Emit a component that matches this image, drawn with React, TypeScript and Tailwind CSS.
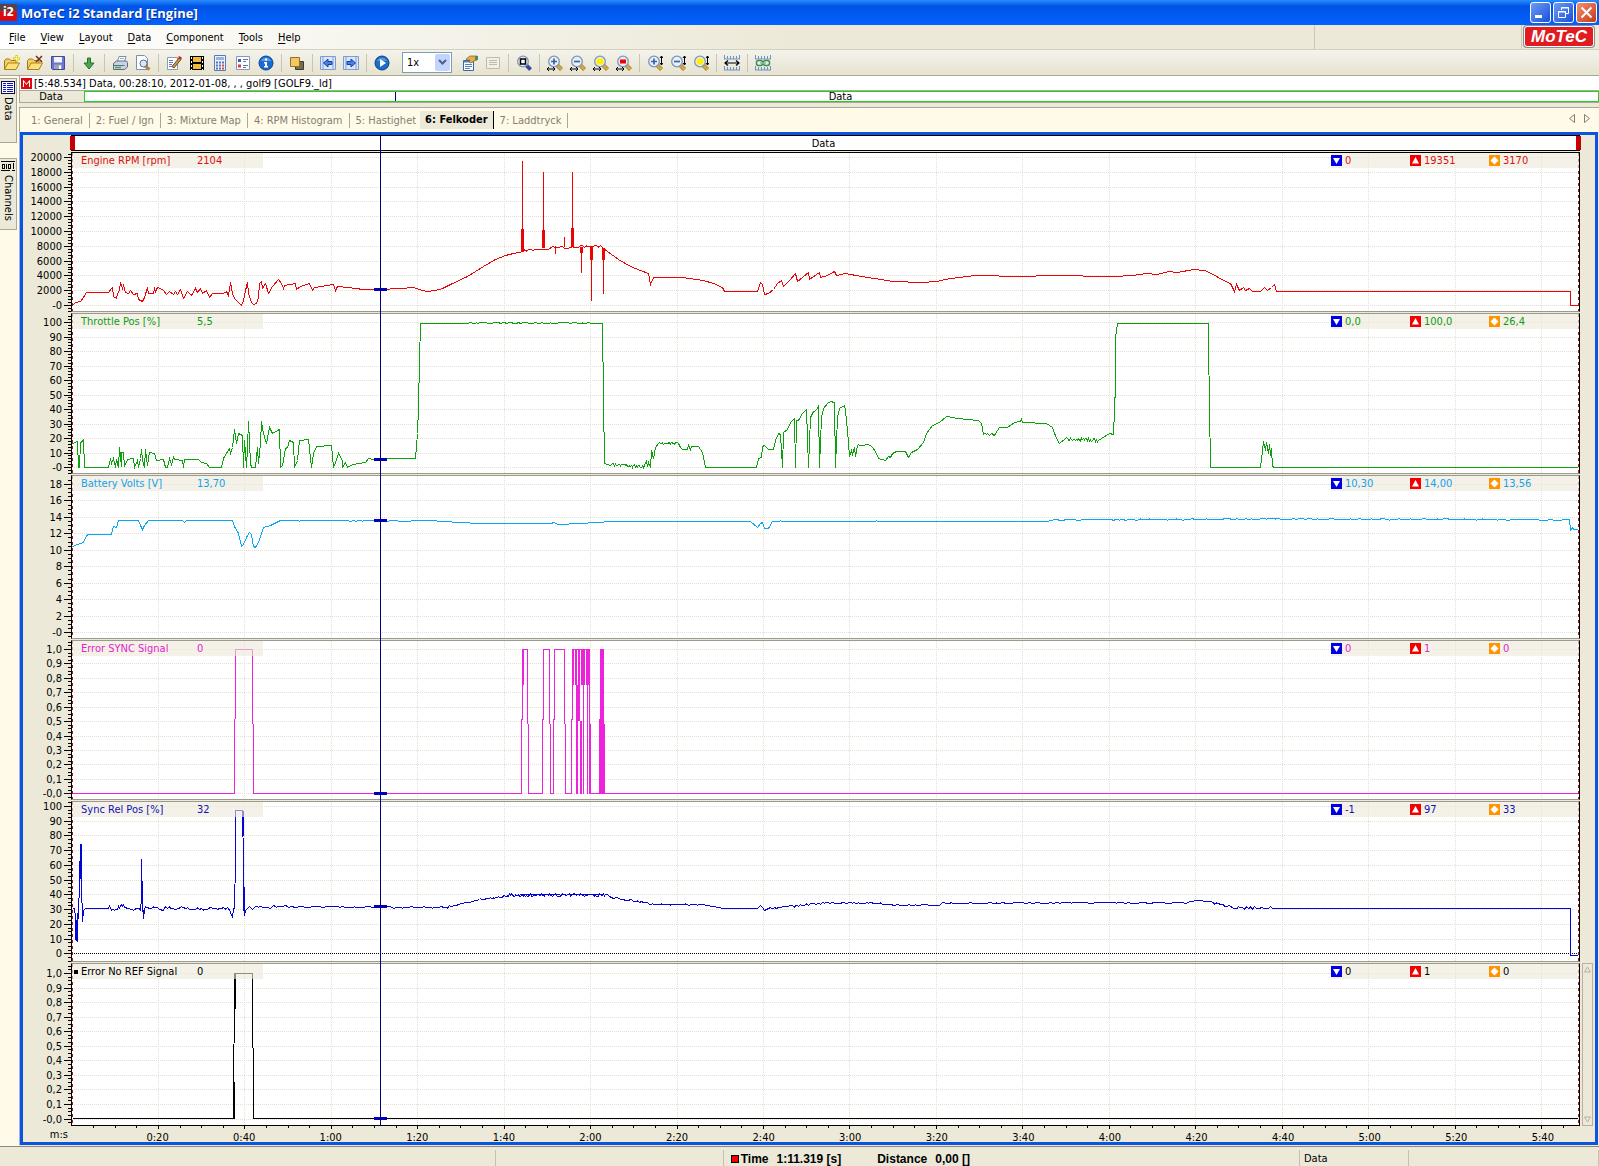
import React from "react";

/* ---------- Chart data, in chart pixels (x: 72 = 0 s, 4.322 px per second) ---------- */

const X0 = 72;
const PX_PER_S = 4.322;
const PLOT_W = 1507;
const DURATION = 348.534;
const CURSOR = 71.319;

function wobble(x0: number, x1: number, y0: number, y1: number, amp: number, step: number, seed: number) {
  const out: string[] = [];
  let s = seed;
  for (let x = x0; x <= x1; x += step) {
    s = (s * 16807) % 2147483647;
    const r = s / 2147483647 - 0.5;
    const y = y0 + ((y1 - y0) * (x - x0)) / (x1 - x0) + r * 2 * amp;
    out.push(`${x.toFixed(1)},${y.toFixed(1)}`);
  }
  return out.join(" ");
}

const rpm = [
  "72,305 75,302 80,301 83,297 86,292 108,292 111,288 112,287 113,296 116,298 117,293 119,290 120,282 122,288 123,285 125,292 128,293 130,290 133,294 137,293 138,299 142,301 144,297 147,287 148,293 153,293 154,288 155,291 157,287 160,288 163,290 166,294 169,291 173,294 175,291 177,294 180,289 183,298 187,291 191,295 195,288 197,292 200,288 202,293 206,290 209,297 212,293 223,293 226,291 228,295 230,282 232,293 234,298 237,301 241,305 243,300 245,290 247,282 248,293 251,302 253,304 256,303 258,297 259,283 261,281 262,288 265,283 268,293 272,286 278,279 281,283 283,288 284,285 290,284 295,283 296,289 300,286 309,283 312,290 314,287 333,284 335,290 337,286 347,287 363,289 380,289 400,288 413,287 419,289 426,291 435,290 442,288 450,284 467,276 483,266 495,259 505,255 513,253 523,251",
  wobble(524, 551, 250, 248, 0.9, 2, 7),
  wobble(552, 601, 247, 246, 1.2, 2, 19),
  "602,247 607,251 618,259 630,266 640,270 648,273 650,284 653,277 682,277 703,280 713,283 722,287 724,291 757,291 760,282 762,284 764,294 768,293 773,289 777,283 781,280 783,286 789,280 795,273 797,281 802,277 808,272 809,279 819,272 820,277 827,275 834,271 836,275 845,273 861,276 893,281 921,282 936,281 950,278 975,275 1021,276 1050,275 1114,276 1132,275 1146,273 1157,274 1168,271 1177,272 1193,269 1204,270 1211,273 1223,280 1230,283 1234,291 1236,284 1239,290 1243,287 1245,290 1249,288 1252,291 1260,291 1264,287 1267,290 1271,287 1274,284 1276,291 1570,291 1570,305 1577,305",
].join(" ");

const rpmBars: number[][] = [
  [522, 161, 1, 90], [521, 229, 3, 22], [543, 172, 1, 76], [542, 230, 3, 18], [572, 172, 1, 74], [571, 228, 3, 19],
  [564, 237, 1, 10], [555, 246, 1, 8], [581, 247, 1, 26], [580, 247, 3, 6], [591, 246, 1, 55], [590, 246, 3, 14],
  [603, 248, 1, 46], [602, 248, 3, 12],
];

const throttle = [
  "72,443 77,441 78,467 79,467 80,442 82,441 83,439 84,467 108,467 110,458 111,463 113,458 115,467 116,459 118,467 119,447 121,466 121,452 123,452 124,466 127,459 133,458 134,467 137,460 138,467 140,458 141,449 142,460 144,467 145,449 147,465 148,458 149,452 154,453 156,460 163,459 165,467 167,467 169,458 171,464 173,457 174,459 182,460 183,467 184,459 198,459 201,462 206,463 209,467 221,467 223,458 226,453 229,448 230,453 232,447 234,429 236,443 238,433 242,435 243,467 244,440 246,467 247,446 248,421 250,463 251,467 255,467 257,447 258,463 260,443 261,421 263,433 266,443 269,427 272,433 279,429 280,467 282,465 285,448 287,447 289,440 293,442 294,467 297,460 299,440 308,439 311,467 313,453 316,446 331,445 333,467 335,462 338,453 342,460 342,467 345,462 347,467 352,464 365,462 368,458 373,459 400,458 415,458 417,433 418,407 419,360 420,323 468,323",
  wobble(470, 601, 322.6, 322.6, 0.8, 2, 5),
  "602,323 603,398 604,463",
  wobble(605, 644, 464.5, 466, 1.5, 1, 3),
  "646,461 647,466 648,462 650,467 651,450 653,458 655,447 658,443",
  wobble(659, 678, 443.5, 442.5, 1.2, 1, 11),
  "680,447 682,449 687,449 688,445 690,449 691,446 698,446 702,452 705,467 756,467 758,458 761,457 762,446 764,445 768,449 773,449 775,440 778,433 780,434 782,467 783,432 787,429 790,422 794,418 795,467 796,420 798,420 802,413 806,409 808,467 810,417 813,411 816,410 818,405 819,467 821,417 823,408 827,403 830,401 834,402 835,467 837,417 839,408 844,405 845,410 847,430 849,456 851,450 852,454 854,447 855,456 857,445",
  wobble(858, 870, 445, 444, 1, 2, 21),
  "872,447 875,451 878,458 885,460 888,456 890,457 892,453 896,451 905,451 908,457 911,452 917,449 923,442 926,433 932,425 939,422 946,416 952,417 957,418 978,420 981,423 983,434",
  wobble(984, 995, 434, 434, 1.3, 1, 31),
  "999,427 1007,427 1014,422 1020,421 1021,419 1022,422 1046,423 1052,427 1056,438 1059,443 1065,438",
  wobble(1066, 1098, 438.5, 440, 1.6, 1, 17),
  "1109,433 1113,434 1115,385 1115,337 1117,323 1208,323 1208,344 1210,467 1260,467 1261,459 1263,441 1265,450 1266,442 1268,453 1269,444 1270,455 1271,448 1272,466 1274,467 1577,467",
].join(" ");

const battery = [
  "72,546 77,544 83,542 86,535 88,534 111,534 113,526 116,527 118,520 138,520 140,525 142,529 144,525 148,520 182,520 184,522 186,520 232,520 234,526 238,533 241,546 243,544 246,537 249,532 251,534 253,546 255,547 258,542 263,527 270,525 280,520",
  wobble(284, 440, 520.4, 520.4, 0.4, 3, 8),
  "444,521 459,522 480,523 551,523 553,522 558,524 580,523 612,521 750,521 757,527 760,523 762,522 764,528 768,528 772,521",
  wobble(780, 1050, 520.8, 520.8, 0.3, 4, 13),
  wobble(1056, 1275, 519.5, 518.5, 0.7, 3, 29),
  wobble(1278, 1566, 518.6, 519.3, 0.7, 3, 37),
  "1569,519 1570,530 1572,527 1573,529 1577,529",
].join(" ");

const sync =
  "72,793 234,793 235,649 252,649 253,793 521,793 522,649 527,649 528,793 542,793 543,649 549,649 550,793 553,793 554,649 564,649 565,793 571,793 572,649 589,649 590,793 599,793 600,649 603,649 604,793 1577,793";
const syncBars: number[][] = [
  [522, 649, 2, 36], [572, 649, 2, 36], [575, 649, 2, 36], [576, 685, 2, 109], [578, 649, 2, 72], [580, 721, 2, 73],
  [581, 649, 4, 36], [583, 685, 1, 109], [586, 649, 4, 36], [587, 685, 1, 109], [589, 685, 1, 109], [600, 649, 4, 145],
  [599, 757, 1, 37], [521, 757, 1, 37],
];

const relPos = [
  "72,908 74,908 75,916 76,940 77,941 77,913 78,918 79,879 80,844 81,883 82,921 83,910 85,908 108,908",
  wobble(109, 124, 908, 906, 2.4, 1, 41),
  wobble(125, 139, 908, 909, 1.2, 2, 43),
  "140,910 141,898 141,859 142,900 143,918 144,909",
  wobble(145, 230, 908, 908, 1.7, 2, 47),
  "232,917 233,908 234,908 235,860 235,810 242,810 243,863 244,915 245,910 247,908",
  wobble(249, 290, 907.5, 906, 1.6, 3, 53),
  wobble(291, 380, 906.5, 906.5, 0.6, 3, 59),
  wobble(384, 447, 907, 907, 0.8, 3, 61),
  wobble(449, 479, 906, 899, 0.9, 2, 67),
  wobble(480, 508, 899, 895.5, 1, 1, 71),
  wobble(509, 604, 894.6, 894.6, 1.4, 1, 73),
  "605,894 607,894",
  wobble(609, 650, 897, 903, 1, 2, 79),
  wobble(652, 705, 904, 904, 0.6, 3, 83),
  "723,908 757,908 760,905 762,907 764,910 768,908",
  wobble(770, 820, 908, 903, 1, 2, 89),
  wobble(822, 880, 902.4, 903, 0.6, 2, 97),
  wobble(882, 940, 904.5, 904.5, 0.6, 3, 101),
  wobble(942, 1185, 902.6, 902.3, 0.8, 3, 103),
  "1190,901 1198,900 1207,901",
  wobble(1210, 1236, 902, 908, 1, 2, 107),
  wobble(1238, 1272, 907.5, 907, 1.3, 2, 109),
  "1277,908 1570,908 1570,955 1577,955",
].join(" ");

const relPosBars: number[][] = [
  [75, 920, 3, 20], [80, 844, 2, 35], [142, 898, 1, 14], [242, 811, 2, 25], [243, 887, 2, 24], [520, 894, 40, 1],
  [570, 894, 34, 1],
];

const noRef = "72,1118 233,1118 234,973 252,973 253,1118 1577,1118";
const noRefBars: number[][] = [
  [234, 973, 2, 36],
  [233, 1082, 2, 37],
];

type Panel = {
  name: string;
  value: string;
  color: string;
  text: string;
  top: number;
  height: number;
  first: number;
  step: number;
  sub: number;
  labels: string[];
  stats: string[];
  trace: string;
  bars?: number[][];
  marker: number;
  zero?: number;
};

const tenths = ["1,0", "0,9", "0,8", "0,7", "0,6", "0,5", "0,4", "0,3", "0,2", "0,1", "-0,0"];

const panels: Panel[] = [
  {
    name: "Engine RPM [rpm]", value: "2104", color: "#ec0404", text: "text-[#dc1010]",
    top: 153, height: 158, first: 157, step: 14.8, sub: 5,
    labels: ["20000", "18000", "16000", "14000", "12000", "10000", "8000", "6000", "4000", "2000", "-0"],
    stats: ["0", "19351", "3170"], trace: rpm, bars: rpmBars, marker: 289,
  },
  {
    name: "Throttle Pos [%]", value: "5,5", color: "#0ca00c", text: "text-[#109a10]",
    top: 314, height: 159, first: 322, step: 14.5, sub: 5,
    labels: ["100", "90", "80", "70", "60", "50", "40", "30", "20", "10", "-0"],
    stats: ["0,0", "100,0", "26,4"], trace: throttle, marker: 459,
  },
  {
    name: "Battery Volts [V]", value: "13,70", color: "#0aa6f6", text: "text-[#14a0e8]",
    top: 476, height: 162, first: 484, step: 16.44, sub: 4,
    labels: ["18", "16", "14", "12", "10", "8", "6", "4", "2", "-0"],
    stats: ["10,30", "14,00", "13,56"], trace: battery, marker: 520,
  },
  {
    name: "Error SYNC Signal", value: "0", color: "#ee22da", text: "text-[#e424d0]",
    top: 641, height: 158, first: 649, step: 14.43, sub: 4,
    labels: tenths, stats: ["0", "1", "0"], trace: sync, bars: syncBars, marker: 793,
  },
  {
    name: "Sync Rel Pos [%]", value: "32", color: "#0404d4", text: "text-[#1010b8]",
    top: 802, height: 159, first: 806, step: 14.73, sub: 4,
    labels: ["100", "90", "80", "70", "60", "50", "40", "30", "20", "10", "0"],
    stats: ["-1", "97", "33"], trace: relPos, bars: relPosBars, marker: 906, zero: 953,
  },
  {
    name: "Error No REF Signal", value: "0", color: "#000000", text: "text-black",
    top: 964, height: 161, first: 973, step: 14.55, sub: 4,
    labels: tenths, stats: ["0", "1", "0"], trace: noRef, bars: noRefBars, marker: 1118,
  },
];

const times = [
  "0:20", "0:40", "1:00", "1:20", "1:40", "2:00", "2:20", "2:40", "3:00",
  "3:20", "3:40", "4:00", "4:20", "4:40", "5:00", "5:20", "5:40",
];

/* ---------- Chart ---------- */

function Axis({ p }: { p: Panel }) {
  const ticks: { y: number; major: boolean }[] = [];
  const small = p.step / p.sub;
  for (let k = -6; k < p.labels.length * p.sub + 4; k++) {
    const y = p.first + k * small;
    const major = k >= 0 && k % p.sub === 0 && k / p.sub < p.labels.length;
    if (y > p.top && y < p.top + p.height) ticks.push({ y: Math.round(y) + 0.5, major });
  }
  return (
    <svg className="block shrink-0" width={48} height={p.height + 2} viewBox={`23 ${p.top - 1} 48 ${p.height + 2}`}>
      <g stroke="#000" shapeRendering="crispEdges">
        {ticks.map((t) => (
          <line key={t.y} x1={t.major ? 64 : 68} x2={71} y1={t.y} y2={t.y} />
        ))}
      </g>
      {p.labels.map((l, i) => (
        <text key={l} x={62} y={Math.round(p.first + i * p.step) + 4} textAnchor="end" fontSize={11} fill="#000">
          {l}
        </text>
      ))}
    </svg>
  );
}

function Stat({ kind, value }: { kind: number; value: string }) {
  const bg = ["#0000e8", "#f40000", "#ff9400"][kind];
  const d = ["M2 3h7L5.500 9z", "M2 8.500h7L5.500 2z", "M5.500 1.500l4 4-4 4-4-4z"][kind];
  return (
    <span className="flex w-[79px] items-center gap-[3px]">
      <svg width={11} height={11} viewBox="0 0 11 11">
        <rect width={11} height={11} fill={bg} />
        <path d={d} fill="#fff" />
      </svg>
      {value}
    </span>
  );
}

function PlotPanel({ p, index }: { p: Panel; index: number }) {
  const last = index === panels.length - 1;
  const cursorX = X0 + CURSOR * PX_PER_S;
  return (
    <div className={last ? "flex" : "mb-px flex"}>
      <Axis p={p} />
      <div
        className={
          "relative min-w-0 flex-1 border border-x-black bg-white " +
          (index === 0 ? "border-t-black border-b-[#9c9a8c]" : last ? "border-t-[#9c9a8c] border-b-black" : "border-y-[#9c9a8c]")
        }
      >
        <svg
          className="block w-full"
          height={p.height}
          viewBox={`${X0} ${p.top} ${PLOT_W} ${p.height}`}
          preserveAspectRatio="none"
          shapeRendering="crispEdges"
        >
          <g stroke="#e2e1d0" strokeDasharray="1 1">
            {p.labels.map((l, i) => {
              const y = Math.round(p.first + i * p.step) + 0.5;
              return <line key={l} x1={X0} x2={X0 + PLOT_W} y1={y} y2={y} />;
            })}
            {times.map((t, i) => {
              const x = Math.floor(X0 + (i + 1) * 20 * PX_PER_S) + 0.5;
              return <line key={t} x1={x} x2={x} y1={p.top} y2={p.top + p.height} />;
            })}
          </g>
          {p.zero && (
            <line x1={X0} x2={X0 + PLOT_W} y1={p.zero + 0.5} y2={p.zero + 0.5} stroke="#000" strokeDasharray="1 1" />
          )}
          <g stroke="#a01820" strokeDasharray="3 3">
            <line x1={X0 + 0.5} x2={X0 + 0.5} y1={p.top} y2={p.top + p.height} />
            <line x1={X0 + PLOT_W - 0.5} x2={X0 + PLOT_W - 0.5} y1={p.top} y2={p.top + p.height} />
          </g>
          <g transform="translate(.5 .5)">
            <polyline points={p.trace} fill="none" stroke={p.color} />
          </g>
          {p.bars?.map((b) => (
            <rect key={b.join()} x={b[0]} y={b[1]} width={b[2]} height={b[3]} fill={p.color} />
          ))}
          <rect x={cursorX - 6} y={p.marker - 1} width={13} height={3} fill="#0000b8" />
        </svg>
        <div
          className={`absolute top-0 left-0 flex h-[15px] w-[191px] items-center bg-[#ece9d8]/60 pt-px pl-[9px] leading-[14px] whitespace-nowrap ${p.text}`}
        >
          {last && <span className="absolute left-[2px] h-1 w-1 bg-black" />}
          <span className="w-[116px]">{p.name}</span>
          <span>{p.value}</span>
        </div>
        <div
          className={`absolute top-0 right-0 flex h-[15px] w-[248px] items-center bg-[#ece9d8]/60 leading-[15px] whitespace-nowrap ${p.text}`}
        >
          {p.stats.map((s, i) => (
            <Stat key={i} kind={i} value={s} />
          ))}
        </div>
      </div>
      <div className="flex w-[15px] shrink-0 justify-center">
        {last && (
          <div className="flex w-[11px] flex-col items-center justify-between border border-[#b4b2a2] py-[2px]">
            <button aria-label="Scroll up" className="block">
              <svg width={7} height={7} viewBox="0 0 7 7" fill="none" stroke="#b4b2a2">
                <path d="M3.500 1L.500 6h6z" />
              </svg>
            </button>
            <button aria-label="Scroll down" className="block">
              <svg width={7} height={7} viewBox="0 0 7 7" fill="none" stroke="#b4b2a2">
                <path d="M3.500 6L.500 1h6z" />
              </svg>
            </button>
          </div>
        )}
      </div>
    </div>
  );
}

function TimeAxis() {
  const marks: number[] = [];
  for (let t = 5; t < DURATION; t += 5) marks.push(t);
  const cell = { width: `${(20 / DURATION) * 100}%` };
  return (
    <div className="flex h-4">
      <span className="w-[48px] shrink-0 pr-[3px] text-right leading-[18px]">m:s</span>
      <div className="min-w-0 flex-1">
        <div className="px-px">
          <svg
            className="block h-[3px] w-full"
            viewBox={`${X0} 0 ${PLOT_W} 3`}
            preserveAspectRatio="none"
            shapeRendering="crispEdges"
          >
            {marks.map((t) => {
              const x = Math.floor(X0 + t * PX_PER_S) + 0.5;
              return <line key={t} x1={x} x2={x} y1={0} y2={t % 20 ? 2 : 3} stroke="#000" />;
            })}
          </svg>
        </div>
        <div className="flex pt-[2px] leading-[14px]">
          <span className="shrink-0" style={{ width: `${(10 / DURATION) * 100}%` }} />
          {times.map((t) => (
            <span key={t} className="shrink-0 text-center" style={cell}>
              {t}
            </span>
          ))}
        </div>
      </div>
      <span className="w-[15px] shrink-0" />
    </div>
  );
}

function Chart() {
  return (
    <section aria-label="Time graph" className="relative mr-px border-[3px] border-[#0a54e0] bg-[#ece9d8]">
      <div className="mb-px flex">
        <span className="w-[48px] shrink-0" />
        <div className="relative flex h-4 min-w-0 flex-1 items-center justify-center border-y border-black bg-white pr-1 pt-px leading-[14px]">
          <span className="absolute top-0 -left-px h-[14px] w-[5px] bg-[#c40000]" />
          Data
          <span className="absolute top-0 -right-px h-[14px] w-[5px] bg-[#c40000]" />
        </div>
        <span className="w-[15px] shrink-0" />
      </div>
      {panels.map((p, i) => (
        <PlotPanel key={p.name} p={p} index={i} />
      ))}
      <TimeAxis />
      <div className="pointer-events-none absolute top-[1px] right-[16px] bottom-[16px] left-[49px]">
        <span className="absolute inset-y-0 w-px bg-[#000080]" style={{ left: `${(CURSOR / DURATION) * 100}%` }} />
      </div>
    </section>
  );
}

/* ---------- Toolbar icons ---------- */

function Ico({ children }: { children: React.ReactNode }) {
  return (
    <svg width={16} height={16} viewBox="0 0 16 16" fill="none">
      {children}
    </svg>
  );
}

const Folder = ({ children }: { children: React.ReactNode }) => (
  <Ico>
    <path d="M.500 14V5.500L2 4h3.500L7 5.500h5V8" fill="#f6cf5a" stroke="#a07a1c" />
    <path d="M.500 14.500L4 8h11.500L12 14.500z" fill="#fde27c" stroke="#a88224" />
    {children}
  </Ico>
);

const Page = () => <path d="M1.500 2.500h10v12h-10z" fill="#fff" stroke="#8a9ab0" />;

function Lens({
  sign,
  fill = "#e4f0fc",
  axis,
  handle = "#d8a83c",
}: {
  sign?: "plus" | "minus" | "yellow" | "red" | "box";
  fill?: string;
  axis?: "h" | "v";
  handle?: string;
}) {
  return (
    <Ico>
      <path d="M10 10l4.500 4.500" stroke="#8c7440" strokeWidth={4} />
      <path d="M10 10l4.500 4.500" stroke={handle} strokeWidth={3} />
      <circle cx={7} cy={6.500} r={5.300} fill={fill} stroke="#8494b0" strokeWidth={1.300} />
      {sign === "plus" && <path d="M4 6.500h6M7 3.500v6" stroke="#3c64a0" strokeWidth={1.700} />}
      {sign === "minus" && <path d="M4 6.500h6" stroke="#3c64a0" strokeWidth={1.700} />}
      {sign === "yellow" && <circle cx={7} cy={6.500} r={3.500} fill="#fff000" />}
      {sign === "red" && <path d="M4 4.500h6v4H4z" fill="#f00000" />}
      {sign === "box" && <path d="M4.500 4h5v5h-5z" fill="#fff" stroke="#000" strokeWidth={1.500} />}
      {axis === "h" && <path d="M0 14h8M2 12l-2 2 2 2M6 12l2 2-2 2" stroke="#000" />}
      {axis === "v" && <path d="M14.500 1v9M13 3l1.500-2L16 3M13 8l1.500 2L16 8" stroke="#000" />}
    </Ico>
  );
}

const Ruler = ({ y }: { y: number }) => (
  <path
    d={`M0 ${y}h16M.500 ${y}v-4M3.500 ${y}v-3M6.500 ${y}v-3M9.500 ${y}v-3M12.500 ${y}v-3M15.500 ${y}v-4`}
    stroke="#6c94c8"
  />
);

const icons: Record<string, React.ReactNode> = {
  "Open log file": (
    <Folder>
      <path d="M12.500 0v7M9 3.500h7" stroke="#d8c000" strokeWidth={2} />
      <path d="M12.500 1v5M10 3.500h5" stroke="#fff67a" />
    </Folder>
  ),
  "Close log file": (
    <Folder>
      <path d="M9 1l6 6M15 1L9 7" stroke="#7a2c14" strokeWidth={1.500} />
    </Folder>
  ),
  Save: (
    <Ico>
      <path d="M1.500 1.500h13v13h-12l-1-1z" fill="#6c74d4" stroke="#4448a0" />
      <path d="M4 2h8v5.500H4z" fill="#f4f6ff" />
      <path d="M4 9.500h8V14H4z" fill="#9ca4b8" />
      <path d="M9 10.500h2V14H9z" fill="#fff" />
    </Ico>
  ),
  Download: (
    <Ico>
      <path d="M6.500 3h3v5H13l-5 6-5-6h3.500z" fill="#48a848" stroke="#2c6c34" />
    </Ico>
  ),
  Print: (
    <Ico>
      <path d="M5.500 6.500L7 1.500h7L12.500 6.500z" fill="#fff" stroke="#7890b0" />
      <path d="M1.500 8.500l3-2.500h10l1 1.500v4.500l-3 2.500h-11z" fill="#c8d2e0" stroke="#5c6c84" />
      <path d="M2 10.500h10.500" stroke="#5c6c84" />
      <path d="M3 12.500h6" stroke="#3cb43c" strokeWidth={1.500} />
      <path d="M8 3.500h4" stroke="#9cb0c8" />
    </Ico>
  ),
  "Print preview": (
    <Ico>
      <path d="M1.500.500h8l3 3v11h-11z" fill="#fff" stroke="#7890b0" />
      <path d="M10 11l4.500 3.500" stroke="#b8843c" strokeWidth={3} />
      <circle cx={8.500} cy={8.500} r={3.500} fill="#d8e8f8" stroke="#5c6c84" />
    </Ico>
  ),
  "Edit details": (
    <Ico>
      <Page />
      <path d="M3 5.500h4M3 7.500h4M3 9.500h3M3 11.500h6" stroke="#5c7cc0" />
      <path d="M6 11.500L13 3l2 1.500L8 13z" fill="#c8984c" stroke="#70501c" />
      <path d="M12 2l1.500-1L16 3l-1 1.500z" fill="#cc2020" />
    </Ico>
  ),
  Video: (
    <Ico>
      <path d="M1 1h14v14H1z" fill="#000" />
      <path d="M4 2h8v5H4zM4 9h8v5H4z" fill="#f0b83c" />
      <path d="M2.500 2v13M13.500 2v13" stroke="#fff" strokeDasharray="2 2" />
    </Ico>
  ),
  Calculator: (
    <Ico>
      <path d="M2.500.500h11v15h-11z" fill="#eef2fa" stroke="#5c78b0" />
      <path d="M4 2h8v3H4z" fill="#94b4e4" />
      <path d="M4 7.500h2M7 7.500h2M10 7.500h2M4 10.500h2M7 10.500h2M4 13.500h2M7 13.500h2" stroke="#5074c0" strokeWidth={2} />
      <path d="M10 10.500h2M10 13.500h2" stroke="#d84848" strokeWidth={2} />
    </Ico>
  ),
  Options: (
    <Ico>
      <path d="M1.500 1.500h13v13h-13z" fill="#fff" stroke="#8898b8" />
      <path d="M3 4h3v3H3z" fill="#3c58d0" />
      <path d="M3 9.500h3v3H3z" fill="#d83c3c" />
      <path d="M8 4.500h5M8 6.500h3M8 10.500h5M8 12.500h3" stroke="#5c78b0" />
    </Ico>
  ),
  About: (
    <Ico>
      <circle cx={8} cy={8} r={7} fill="#1a6cd0" stroke="#0c4490" />
      <path d="M3 6a5.500 5.500 0 0 1 10 0z" fill="#78b4f0" opacity={0.7} />
      <path d="M7 3.500h2v2H7zM6 7h3v4h1v1.500H6V11h1V8.500H6z" fill="#fff" />
    </Ico>
  ),
  "Bring to front": (
    <Ico>
      <path d="M6.500 6.500h8v8h-8z" fill="#746c54" stroke="#443c28" />
      <path d="M1.500 2.500h9v9h-9z" fill="#f4c860" stroke="#94702c" />
    </Ico>
  ),
  Previous: (
    <Ico>
      <path d="M.500 1.500h15v13H.500z" fill="#dce8fa" stroke="#7c9cd4" />
      <path d="M3 2v12M13 2v12" stroke="#7c9cd4" />
      <path d="M3.500 8L8 4v2.500h4v3H8V12z" fill="#4c80e4" stroke="#1440a0" />
    </Ico>
  ),
  Next: (
    <Ico>
      <path d="M.500 1.500h15v13H.500z" fill="#dce8fa" stroke="#7c9cd4" />
      <path d="M3 2v12M13 2v12" stroke="#7c9cd4" />
      <path d="M12.500 8L8 4v2.500H4v3h4V12z" fill="#4c80e4" stroke="#1440a0" />
    </Ico>
  ),
  Play: (
    <Ico>
      <circle cx={8} cy={8} r={7} fill="#1c6cc8" stroke="#0c4088" />
      <path d="M3 6a5.500 5.500 0 0 1 10 0z" fill="#74b0ec" opacity={0.6} />
      <path d="M6 4l6 4-6 4z" fill="#fff" />
    </Ico>
  ),
  Properties: (
    <Ico>
      <path d="M1.500 5.500h10v10h-10z" fill="#fff" stroke="#3c64b0" />
      <path d="M2 6h9v1.500H2z" fill="#4c7cd8" />
      <path d="M3 9.500h7M3 11.500h7M3 13.500h5" stroke="#5c7cc0" />
      <path d="M4 4l4-3h7v4l-3 1-3 2-2-1 1-2H5z" fill="#e0b050" stroke="#846024" strokeWidth={0.700} />
      <path d="M13 1h3v4h-3z" fill="#4c8c5c" />
    </Ico>
  ),
  Values: (
    <Ico>
      <path d="M1.500 2.500h13v11h-13z" fill="#f2f0e6" stroke="#c0bcac" />
      <path d="M4 5.500h8M4 7.500h8M4 9.500h8" stroke="#c0bcac" />
    </Ico>
  ),
  "Zoom window": <Lens sign="box" handle="#2444c0" />,
  "Zoom in": <Lens sign="plus" axis="h" />,
  "Zoom out": <Lens sign="minus" axis="h" />,
  "Zoom full": <Lens sign="yellow" axis="h" />,
  "Zoom fastest lap": <Lens sign="red" axis="h" />,
  "Zoom in vertical": <Lens sign="plus" axis="v" />,
  "Zoom out vertical": <Lens sign="minus" axis="v" />,
  "Zoom full vertical": <Lens sign="yellow" axis="v" />,
  Offset: (
    <Ico>
      <Ruler y={4} />
      <path d="M1 8h14M4 5.500L1 8l3 2.500M12 5.500L15 8l-3 2.500" stroke="#000" strokeWidth={1.200} />
      <Ruler y={15} />
    </Ico>
  ),
  "Link offset": (
    <Ico>
      <Ruler y={4} />
      <Ruler y={15} />
      <rect x={1.500} y={5.500} width={6} height={5} rx={2} stroke="#3c8c54" strokeWidth={1.500} />
      <rect x={8.500} y={5.500} width={6} height={5} rx={2} stroke="#3c8c54" strokeWidth={1.500} />
      <path d="M5 8h6" stroke="#84c494" strokeWidth={1.500} />
    </Ico>
  ),
};

const groupsLeft = [
  ["Open log file", "Close log file", "Save"],
  ["Download"],
  ["Print", "Print preview"],
  ["Edit details", "Video", "Calculator", "Options", "About"],
  ["Bring to front"],
  ["Previous", "Next"],
  ["Play"],
];
const groupsRight = [
  ["Properties", "Values"],
  ["Zoom window"],
  ["Zoom in", "Zoom out", "Zoom full", "Zoom fastest lap"],
  ["Zoom in vertical", "Zoom out vertical", "Zoom full vertical"],
  ["Offset"],
  ["Link offset"],
];

function Separator() {
  return (
    <span className="flex w-2 justify-center">
      <span className="h-[18px] w-px bg-[#c8c5b2]" />
    </span>
  );
}

function Groups({ groups }: { groups: string[][] }) {
  return (
    <>
      {groups.map((g, i) => (
        <React.Fragment key={g[0]}>
          {i > 0 && <Separator />}
          {g.map((name) => (
            <button key={name} aria-label={name} className="flex h-[23px] w-[23px] items-center justify-center">
              {icons[name]}
            </button>
          ))}
        </React.Fragment>
      ))}
    </>
  );
}

/* ---------- Window ---------- */

function TitleBar() {
  const btn = "flex h-[21px] w-[21px] items-center justify-center rounded-[3px] border border-white bg-linear-to-br";
  return (
    <header className="flex h-[25px] items-center bg-linear-to-b from-[#2a8cff] via-[#0053e6] via-25% to-[#0363ff] pr-[2px]">
      <span className="flex h-[17px] w-[17px] items-center justify-center bg-linear-to-b from-[#5c4044] from-40% to-[#d80c10] to-45% text-[12px] leading-[17px] font-bold text-white">
        i2
      </span>
      <h1 className="ml-1 flex-1 font-['Open_Sans',sans-serif] text-[13px] leading-[16px] font-bold text-white [text-shadow:1px_1px_#0a2c90]">
        MoTeC i2 Standard [Engine]
      </h1>
      <div className="flex gap-[2px]">
        <button aria-label="Minimize" className={`${btn} from-[#6c9cf4] to-[#1c4cd8]`}>
          <svg width={13} height={13} viewBox="0 0 13 13">
            <path d="M1 9h7v3H1z" fill="#fff" />
          </svg>
        </button>
        <button aria-label="Restore" className={`${btn} from-[#6c9cf4] to-[#1c4cd8]`}>
          <svg width={13} height={13} viewBox="0 0 13 13" fill="none" stroke="#fff">
            <path d="M4.500 4V1.500h7v6H9M4 2h8" />
            <path d="M1.500 5.500h7v6h-7zM1 6h8" />
          </svg>
        </button>
        <button aria-label="Close" className={`${btn} from-[#f09070] to-[#c83410]`}>
          <svg width={13} height={13} viewBox="0 0 13 13" stroke="#fff" strokeWidth={2}>
            <path d="M1.500 1.500l10 10M11.500 1.500l-10 10" />
          </svg>
        </button>
      </div>
    </header>
  );
}

function MenuBar() {
  return (
    <nav className="flex h-[25px] items-stretch border-b border-[#d4d0be] bg-linear-to-r from-white to-[#ece9d8] to-50%">
      <div className="flex flex-1 items-center gap-[15px] pt-[2px] pl-[9px]">
        {["File", "View", "Layout", "Data", "Component", "Tools", "Help"].map((m) => (
          <button key={m}>
            <span className="underline underline-offset-2">{m[0]}</span>
            {m.slice(1)}
          </button>
        ))}
      </div>
      <span className="w-[208px] border-x border-[#cbc8b6]" />
      <span className="mr-1 mb-px ml-px flex w-[72px] items-center justify-center rounded-[4px] border-2 border-[#8c8c8c] bg-[#e01c20] font-['Liberation_Sans',sans-serif] text-[17px] leading-[17px] font-bold text-white italic outline-1 -outline-offset-2 outline-white">
        MoTeC
      </span>
    </nav>
  );
}

function Toolbar() {
  return (
    <div className="flex h-[26px] items-center border-b border-[#aca899] bg-linear-to-b from-[#f4f3ec] to-[#e6e3d0]">
      <Groups groups={groupsLeft} />
      <span className="relative mr-[6px] ml-[9px] h-[21px] w-[50px]">
        <select
          aria-label="Playback speed"
          className="h-full w-full appearance-none border border-[#7f9db9] bg-white pl-[4px]"
        >
          <option>1x</option>
        </select>
        <span className="pointer-events-none absolute inset-y-[2px] right-[2px] flex w-[15px] items-center justify-center rounded-[2px] bg-[#c2d3fc]">
          <svg width={9} height={7} viewBox="0 0 9 7" fill="none" stroke="#4d6185" strokeWidth={2}>
            <path d="M1 1l3.500 3.500L8 1" />
          </svg>
        </span>
      </span>
      <Groups groups={groupsRight} />
    </div>
  );
}

function SideBar() {
  const tab =
    "flex w-[17px] flex-col items-center border border-l-0 border-[#aca899] bg-[#ece9d8] pt-[2px] leading-[16px]";
  return (
    <aside className="flex w-[19px] shrink-0 flex-col gap-[15px] bg-[#fffbe8] pt-[2px]">
      <button className={`${tab} h-[65px] gap-[3px]`}>
        <svg width={14} height={13} viewBox="0 0 14 13" shapeRendering="crispEdges">
          <path d="M0 0h14v13H0z" fill="#101040" />
          <path d="M1 1h12v11H1z" fill="#fff" />
          <path d="M2 2.500h3M6 2.500h6M2 4.500h3M6 4.500h6M2 6.500h3M6 6.500h6M2 8.500h3M6 8.500h6M2 10.500h3M6 10.500h6" stroke="#1010e0" />
        </svg>
        <span className="[writing-mode:vertical-rl]">Data</span>
      </button>
      <button className={`${tab} h-[72px] gap-1`}>
        <svg width={14} height={10} viewBox="0 0 14 10" fill="none" stroke="#000" shapeRendering="crispEdges">
          <path d="M0 .500h14M0 9.500h9M11 9.500h3M1.500 3.500h2v4h-2zM5.500 3v5M7.500 3.500h2v4h-2zM12.500 2v6" />
        </svg>
        <span className="[writing-mode:vertical-rl]">Channels</span>
      </button>
    </aside>
  );
}

function DataStrip() {
  return (
    <div className="border-b border-l border-[#aca899]">
      <div className="flex h-[15px] items-center gap-[2px] border-b border-[#aca899] bg-white pl-px">
        <svg width={11} height={11} viewBox="0 0 11 11">
          <path d="M0 0h11v11H0z" fill="#d80c10" />
          <path d="M2.500 9V2.500l3 4 3-4V9" fill="none" stroke="#fff" />
        </svg>
        <span className="pt-px">[5:48.534] Data, 00:28:10, 2012-01-08, , , golf9 [GOLF9._ld]</span>
      </div>
      <div className="flex h-[11px] leading-[12px]">
        <span className="w-[64px] pr-[2px] text-center">Data</span>
        <div className="relative flex-1 border border-[#1ed41e] bg-white pr-[2px] text-center leading-[10px]">
          <span className="absolute inset-y-0 w-px bg-[#000080]" style={{ left: `${(CURSOR / DURATION) * 100}%` }} />
          Data
        </div>
      </div>
    </div>
  );
}

function Tabs() {
  const tabs = ["1: General", "2: Fuel / Ign", "3: Mixture Map", "4: RPM Histogram", "5: Hastighet", "6: Felkoder", "7: Laddtryck"];
  return (
    <div className="mt-1 flex h-[25px] items-center border-t border-l border-[#aca899] bg-[#fffbe8] pr-[9px] pl-[5px]">
      <div role="tablist" className="flex flex-1 items-center">
        {tabs.map((t) =>
          t.startsWith("6") ? (
            <button
              key={t}
              role="tab"
              aria-selected
              className="h-[18px] border-r border-black bg-[#ece9d8] px-[5px] font-bold"
            >
              {t}
            </button>
          ) : (
            <button
              key={t}
              role="tab"
              className={
                "h-[15px] px-[6px] leading-[15px] text-[#838072] " + (t.startsWith("5") ? "pr-1" : "border-r border-[#aca899]")
              }
            >
              {t}
            </button>
          ),
        )}
      </div>
      <div className="flex gap-[9px] pb-1">
        <button aria-label="Scroll tabs left">
          <svg className="block" width={6} height={9} viewBox="0 0 6 9" fill="none" stroke="#838072">
            <path d="M5.500 .500v8l-5-4z" />
          </svg>
        </button>
        <button aria-label="Scroll tabs right">
          <svg className="block" width={6} height={9} viewBox="0 0 6 9" fill="none" stroke="#838072">
            <path d="M.500 .500v8l5-4z" />
          </svg>
        </button>
      </div>
    </div>
  );
}

function StatusBar() {
  const cell = "flex items-center border-r border-[#c4c1ae] pt-[2px]";
  return (
    <footer className="flex h-[20px] items-stretch border-t border-[#8c8a7c] bg-[#ece9d8] pt-[3px]">
      <span className={`${cell} w-[31%]`} />
      <span className={`${cell} w-[228px]`} />
      <span
        className={`${cell} flex-1 gap-2 pl-[7px] font-['Liberation_Sans',sans-serif] text-[12px] font-bold whitespace-pre`}
      >
        <span className="-mr-[6px] h-[8px] w-[8px] border border-black bg-[#f00000]" />
        <span>Time</span>
        <span>1:11.319 [s]</span>
        <span className="ml-7">Distance</span>
        <span>0,00 []</span>
      </span>
      <span className={`${cell} w-[109px] pl-1`}>Data</span>
      <span className={`${cell} w-[190px]`} />
    </footer>
  );
}

export default function App() {
  return (
    <div className="flex min-h-screen flex-col bg-[#ece9d8] font-['DejaVu_Sans_Condensed','DejaVu_Sans',sans-serif] text-[11px] leading-[14px] text-black">
      <TitleBar />
      <MenuBar />
      <Toolbar />
      <div className="flex flex-1">
        <SideBar />
        <main className="min-w-0 flex-1">
          <DataStrip />
          <Tabs />
          <div className="border-l border-[#9cb4e4]">
            <Chart />
          </div>
        </main>
      </div>
      <StatusBar />
    </div>
  );
}
